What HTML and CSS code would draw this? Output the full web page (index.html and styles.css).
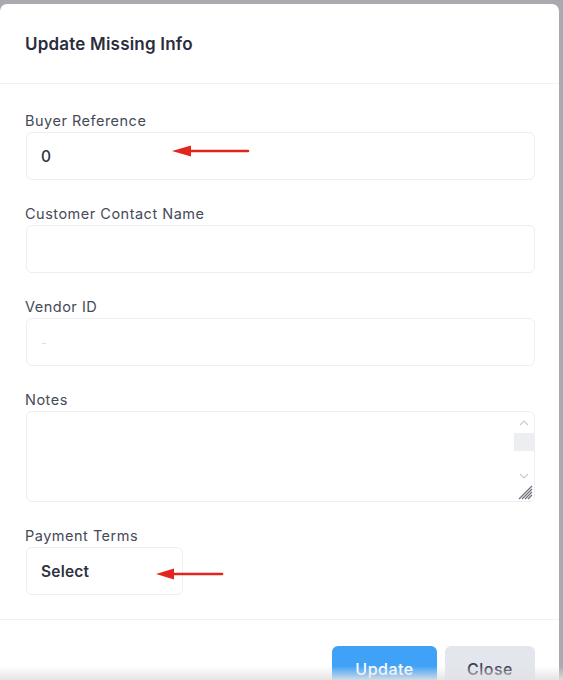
FILE: index.html
```html
<!DOCTYPE html>
<html lang="en">
<head>
<meta charset="utf-8">
<title>Update Missing Info</title>
<link rel="stylesheet" href="styles.css">
</head>
<body>
<div class="modal">
  <div class="modal-header">
    <h2 class="modal-title">Update Missing Info</h2>
  </div>
  <div class="modal-body">
    <div class="field">
      <label class="label">Buyer Reference</label>
      <div class="input-wrap">
        <div class="input">0</div>
        <svg class="arrow arrow-1" width="80" height="14" viewBox="0 0 80 14"><line x1="14" y1="7" x2="76" y2="7" stroke="#e3261d" stroke-width="2.6" stroke-linecap="round"/><polygon points="0,7 19,1.5 19,12.5" fill="#e3261d"/></svg>
      </div>
    </div>
    <div class="field">
      <label class="label">Customer Contact Name</label>
      <div class="input"></div>
    </div>
    <div class="field">
      <label class="label">Vendor ID</label>
      <div class="input"><span class="faint">-</span></div>
    </div>
    <div class="field">
      <label class="label">Notes</label>
      <div class="textarea">
        <div class="sb">
          <svg class="sb-up" width="10" height="6" viewBox="0 0 10 6"><polyline points="1,5 5,1 9,5" fill="none" stroke="#c9ccd3" stroke-width="1.2"/></svg>
          <div class="sb-thumb"></div>
          <svg class="sb-down" width="10" height="6" viewBox="0 0 10 6"><polyline points="1,1 5,5 9,1" fill="none" stroke="#c9ccd3" stroke-width="1.2"/></svg>
        </div>
        <svg class="grip" width="16" height="16" viewBox="0 0 16 16"><g stroke="#6f727b" stroke-width="1.2"><line x1="15" y1="2" x2="2" y2="15"/><line x1="15" y1="5" x2="5" y2="15"/><line x1="15" y1="8" x2="8" y2="15"/><line x1="15" y1="11" x2="11" y2="15"/></g></svg>
      </div>
    </div>
    <div class="field">
      <label class="label">Payment Terms</label>
      <div class="input-wrap">
        <div class="select">Select</div>
        <svg class="arrow arrow-2" width="70" height="14" viewBox="0 0 70 14"><line x1="14" y1="7" x2="66" y2="7" stroke="#e3261d" stroke-width="2.6" stroke-linecap="round"/><polygon points="0,7 18,1.5 18,12.5" fill="#e3261d"/></svg>
      </div>
    </div>
  </div>
  <div class="modal-footer">
    <button class="btn btn-primary">Update</button>
    <button class="btn btn-light">Close</button>
  </div>
</div>
<div class="bottom-fade"></div>
</body>
</html>
```
FILE: styles.css
```css
* { box-sizing: border-box; }
html, body { margin: 0; padding: 0; }
body {
  background: #a9aaad;
  font-family: "Inter", "Open Sans", sans-serif;
  height: 680px;
  overflow: hidden;
}
.modal {
  margin-top: 4px;
  width: 559px;
  background: #fff;
  border-radius: 7px 7px 0 0;
  height: 720px;
}
.modal-header {
  height: 80px;
  padding: 0 25px;
  display: flex;
  align-items: center;
  border-bottom: 1px solid #eff2f5;
}
.modal-title {
  margin: 0;
  font-size: 17px;
  font-weight: 600;
  color: #2a2d3d;
  letter-spacing: 0.2px;
}
.modal-body {
  padding: 27px 24px 0 26px;
}
.field {
  display: flex;
  flex-direction: column;
  margin-bottom: 24px;
}
.field:last-child { margin-bottom: 24px; }
.label {
  font-size: 14.5px;
  line-height: 20px;
  letter-spacing: 0.5px;
  color: #464a58;
  margin-bottom: 1px;
  margin-left: -1px;
}
.input-wrap { position: relative; }
.input {
  height: 48px;
  border: 1px solid #eceef3;
  border-radius: 6px;
  padding: 0 14px;
  display: flex;
  align-items: center;
  font-size: 15.5px;
  color: #2f3241;
  font-weight: 500;
}
.faint { color: #dcdde2; font-size: 12px; }
.textarea {
  position: relative;
  height: 91px;
  border: 1px solid #eceef3;
  border-radius: 6px;
}
.sb {
  position: absolute;
  right: 0;
  top: 0;
  width: 20px;
  height: 72px;
  display: flex;
  flex-direction: column;
  align-items: center;
}
.sb-up { margin-top: 8px; }
.sb-thumb {
  width: 20px;
  height: 18px;
  background: #eceef1;
  margin-top: 7px;
}
.sb-down { margin-top: 22px; }
.grip {
  position: absolute;
  right: 1px;
  bottom: 1px;
}
.select {
  width: 157px;
  height: 48px;
  border: 1px solid #eceef3;
  border-radius: 6px;
  padding: 0 14px;
  display: flex;
  align-items: center;
  font-size: 15.5px;
  font-weight: 600;
  letter-spacing: 0.2px;
  color: #2f3241;
}
.arrow { position: absolute; }
.arrow-1 { left: 146px; top: 12px; }
.arrow-2 { left: 130px; top: 20px; }
.modal-footer {
  border-top: 1px solid #eff2f5;
  padding: 26px 24px 0 26px;
  display: flex;
  justify-content: flex-end;
  gap: 8px;
}
.btn {
  border: none;
  border-radius: 6px;
  height: 46px;
  font-family: inherit;
  font-size: 16px;
  letter-spacing: 0.5px;
  font-weight: 500;
  padding: 0;
}
.btn-primary {
  width: 105px;
  background: #3fa2f6;
  color: #fff;
}
.btn-light {
  width: 90px;
  background: #e4e6ee;
  color: #3c3f4d;
}
.bottom-fade {
  position: fixed;
  left: 0;
  right: 0;
  bottom: 0;
  height: 14px;
  background: linear-gradient(to bottom, rgba(230,230,232,0), rgba(225,225,228,0.9));
  pointer-events: none;
}
```
